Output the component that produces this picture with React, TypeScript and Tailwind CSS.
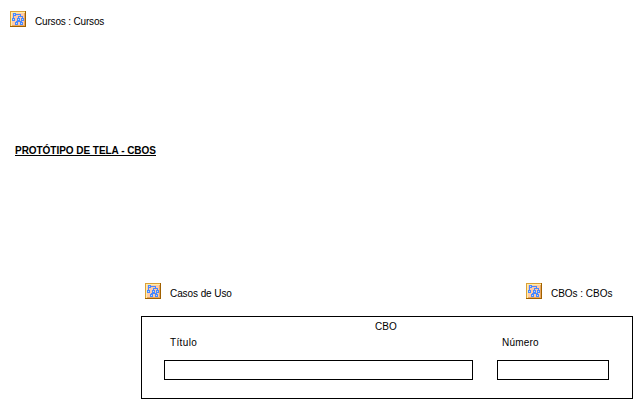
const nodes: [number, number][] = [
  [3, 2],
  [2, 7],
  [7, 7],
  [11, 7],
  [5, 11],
  [10, 11],
];

function DiagramIcon() {
  return (
    <svg className="size-4 shrink-0" viewBox="0 0 16 16" shapeRendering="crispEdges">
      <rect width="16" height="16" fill="#a06000" />
      <rect width="15" height="15" fill="#dca038" />
      <rect x="1" y="1" width="14" height="14" fill="#fff0a8" />
      <rect x="2" y="2" width="13" height="13" fill="#ffcaa8" />
      <path d="M14.5 2v13M2 14.5h13" fill="none" stroke="#e8a860" />
      <path
        d="M6 3.5h4.5v2M3.5 5v2M8.5 7v-1.5h4v1.5M8.5 10v.5M6.5 11v-.5h5v.5"
        fill="none"
        stroke="#4888ff"
      />
      {nodes.map(([x, y]) => (
        <g key={`${x}-${y}`}>
          <rect x={x} y={y} width="3" height="3" fill="#4888ff" />
          <rect x={x + 1} y={y + 1} width="1" height="1" fill="#c0e0f0" />
        </g>
      ))}
    </svg>
  );
}

function DiagramLink({ label, spacing }: { label: string; spacing: string }) {
  return (
    <div className="flex h-4 items-start gap-[9px]">
      <DiagramIcon />
      <span className={`pt-[5px] leading-3 ${spacing}`}>{label}</span>
    </div>
  );
}

export default function App() {
  return (
    <main className="flex h-[408px] w-[642px] flex-col overflow-hidden bg-white font-['Liberation_Sans',Arial,sans-serif] text-[10px] leading-3 whitespace-nowrap text-black">
      <header className="h-[134px] pt-[11px] pl-[10px]">
        <DiagramLink label="Cursos : Cursos" spacing="tracking-[-0.17px]" />
      </header>
      <section className="h-[149px] pt-[12px] pl-[15px]">
        <h1 className="h-[10px] w-[141px] border-b border-black leading-[10px] font-bold tracking-[-0.04px]">
          PROTÓTIPO DE TELA - CBOS
        </h1>
      </section>
      <div className="flex h-[33px] pl-[145px]">
        <div className="w-[381px]">
          <DiagramLink label="Casos de Uso" spacing="tracking-[-0.08px]" />
        </div>
        <DiagramLink label="CBOs : CBOs" spacing="tracking-[-0.02px]" />
      </div>
      <section className="ml-[141px] h-[83px] w-[492px] border border-black pt-1 pl-[22px]">
        <h2 className="h-4 pl-[211px]">CBO</h2>
        <div className="flex gap-6">
          <div className="w-[309px]">
            <div className="h-[23px] pl-[6px] tracking-[0.35px]">Título</div>
            <div className="h-5 border border-black" />
          </div>
          <div className="w-[112px]">
            <div className="h-[23px] pl-[5px] tracking-[0.2px]">Número</div>
            <div className="h-5 border border-black" />
          </div>
        </div>
      </section>
    </main>
  );
}
